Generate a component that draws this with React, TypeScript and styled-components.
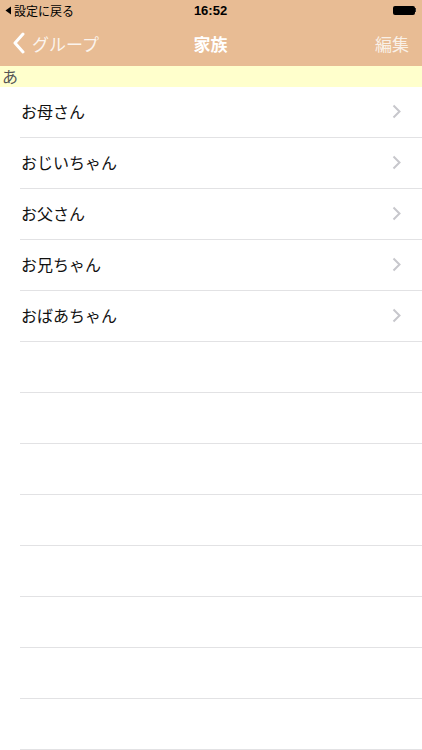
import React from 'react';
import styled, {createGlobalStyle} from 'styled-components';

const GlobalStyle = createGlobalStyle`
  *, *::before, *::after {
    box-sizing: border-box;
  }
  html, body {
    margin: 0;
    padding: 0;
    background: #ffffff;
  }
  body {
    font-family: "Liberation Sans", "Noto Sans CJK JP", sans-serif;
  }
`;

const Screen = styled.div`
  width: 422px;
  height: 750px;
  overflow: hidden;
  display: flex;
  flex-direction: column;
  background: #ffffff;
`;

const TopArea = styled.div`
  background: #e8bc94;
  color: #ffffff;
`;

const StatusBar = styled.div`
  height: 20px;
  display: grid;
  grid-template-columns: 1fr auto 1fr;
  align-items: center;
  padding: 0 6px 0 5px;
  color: #000000;
  font-size: 12px;
`;

const BackToApp = styled.div`
  display: flex;
  align-items: center;
  gap: 2px;
  font-family: "Noto Sans CJK JP", sans-serif;
  font-size: 12px;
`;

const Time = styled.div`
  font-weight: bold;
  font-size: 13px;
`;

const Battery = styled.div`
  justify-self: end;
  display: flex;
  align-items: center;
`;

const BatteryBody = styled.div`
  width: 22px;
  height: 9px;
  background: #000000;
  border-radius: 2px;
`;

const BatteryTip = styled.div`
  width: 1.5px;
  height: 4px;
  background: #333333;
`;

const NavBar = styled.div`
  height: 46px;
  display: grid;
  grid-template-columns: 1fr auto 1fr;
  align-items: center;
  padding: 0 13px 0 12px;
  font-family: "Noto Sans CJK JP", sans-serif;
  font-size: 17px;
`;

const NavBack = styled.div`
  display: flex;
  align-items: center;
  gap: 6px;
  color: rgba(255, 255, 255, 0.85);
`;

const NavTitle = styled.div`
  font-weight: bold;
  color: #ffffff;
`;

const NavAction = styled.div`
  justify-self: end;
  color: rgba(255, 255, 255, 0.8);
`;

const SectionHeader = styled.div`
  height: 21px;
  background: #ffffcc;
  color: #555555;
  font-family: "Noto Sans CJK JP", sans-serif;
  font-size: 16px;
  line-height: 21px;
  padding-left: 2px;
`;

const List = styled.div`
  display: flex;
  flex-direction: column;
  padding-left: 20px;
`;

const Row = styled.div`
  height: 51px;
  flex-shrink: 0;
  border-bottom: 1px solid #e2e2e4;
  display: flex;
  align-items: center;
  justify-content: space-between;
  padding: 0 21px 2px 1px;
  font-family: "Noto Sans CJK JP", sans-serif;
  font-size: 16px;
  color: #111111;
`;

const ChevronLeft = () => (
  <svg width="14" height="22" viewBox="0 0 14 22">
    <path d="M11 2 L3 11 L11 20" fill="none" stroke="#ffffff" strokeWidth="3" strokeLinecap="round" strokeLinejoin="round" />
  </svg>
);

const Disclosure = () => (
  <svg width="9" height="15" viewBox="0 0 9 15">
    <path d="M1.5 1.5 L7.5 7.5 L1.5 13.5" fill="none" stroke="#c7c7cc" strokeWidth="2" />
  </svg>
);

const BackTriangle = () => (
  <svg width="7" height="9" viewBox="0 0 7 9">
    <path d="M6 0.5 L0.5 4.5 L6 8.5 Z" fill="#000000" />
  </svg>
);

const people = ['お母さん', 'おじいちゃん', 'お父さん', 'お兄ちゃん', 'おばあちゃん'];

const App = () => {
  const rows = [...people, ...Array(8).fill('')];
  return (
    <Screen>
      <GlobalStyle />
      <TopArea>
        <StatusBar>
          <BackToApp>
            <BackTriangle />
            設定に戻る
          </BackToApp>
          <Time>16:52</Time>
          <Battery>
            <BatteryBody />
            <BatteryTip />
          </Battery>
        </StatusBar>
        <NavBar>
          <NavBack>
            <ChevronLeft />
            グループ
          </NavBack>
          <NavTitle>家族</NavTitle>
          <NavAction>編集</NavAction>
        </NavBar>
      </TopArea>
      <SectionHeader>あ</SectionHeader>
      <List>
        {rows.map((name, i) => (
          <Row key={i}>
            <span>{name}</span>
            {name && <Disclosure />}
          </Row>
        ))}
      </List>
    </Screen>
  );
};

export default App;
